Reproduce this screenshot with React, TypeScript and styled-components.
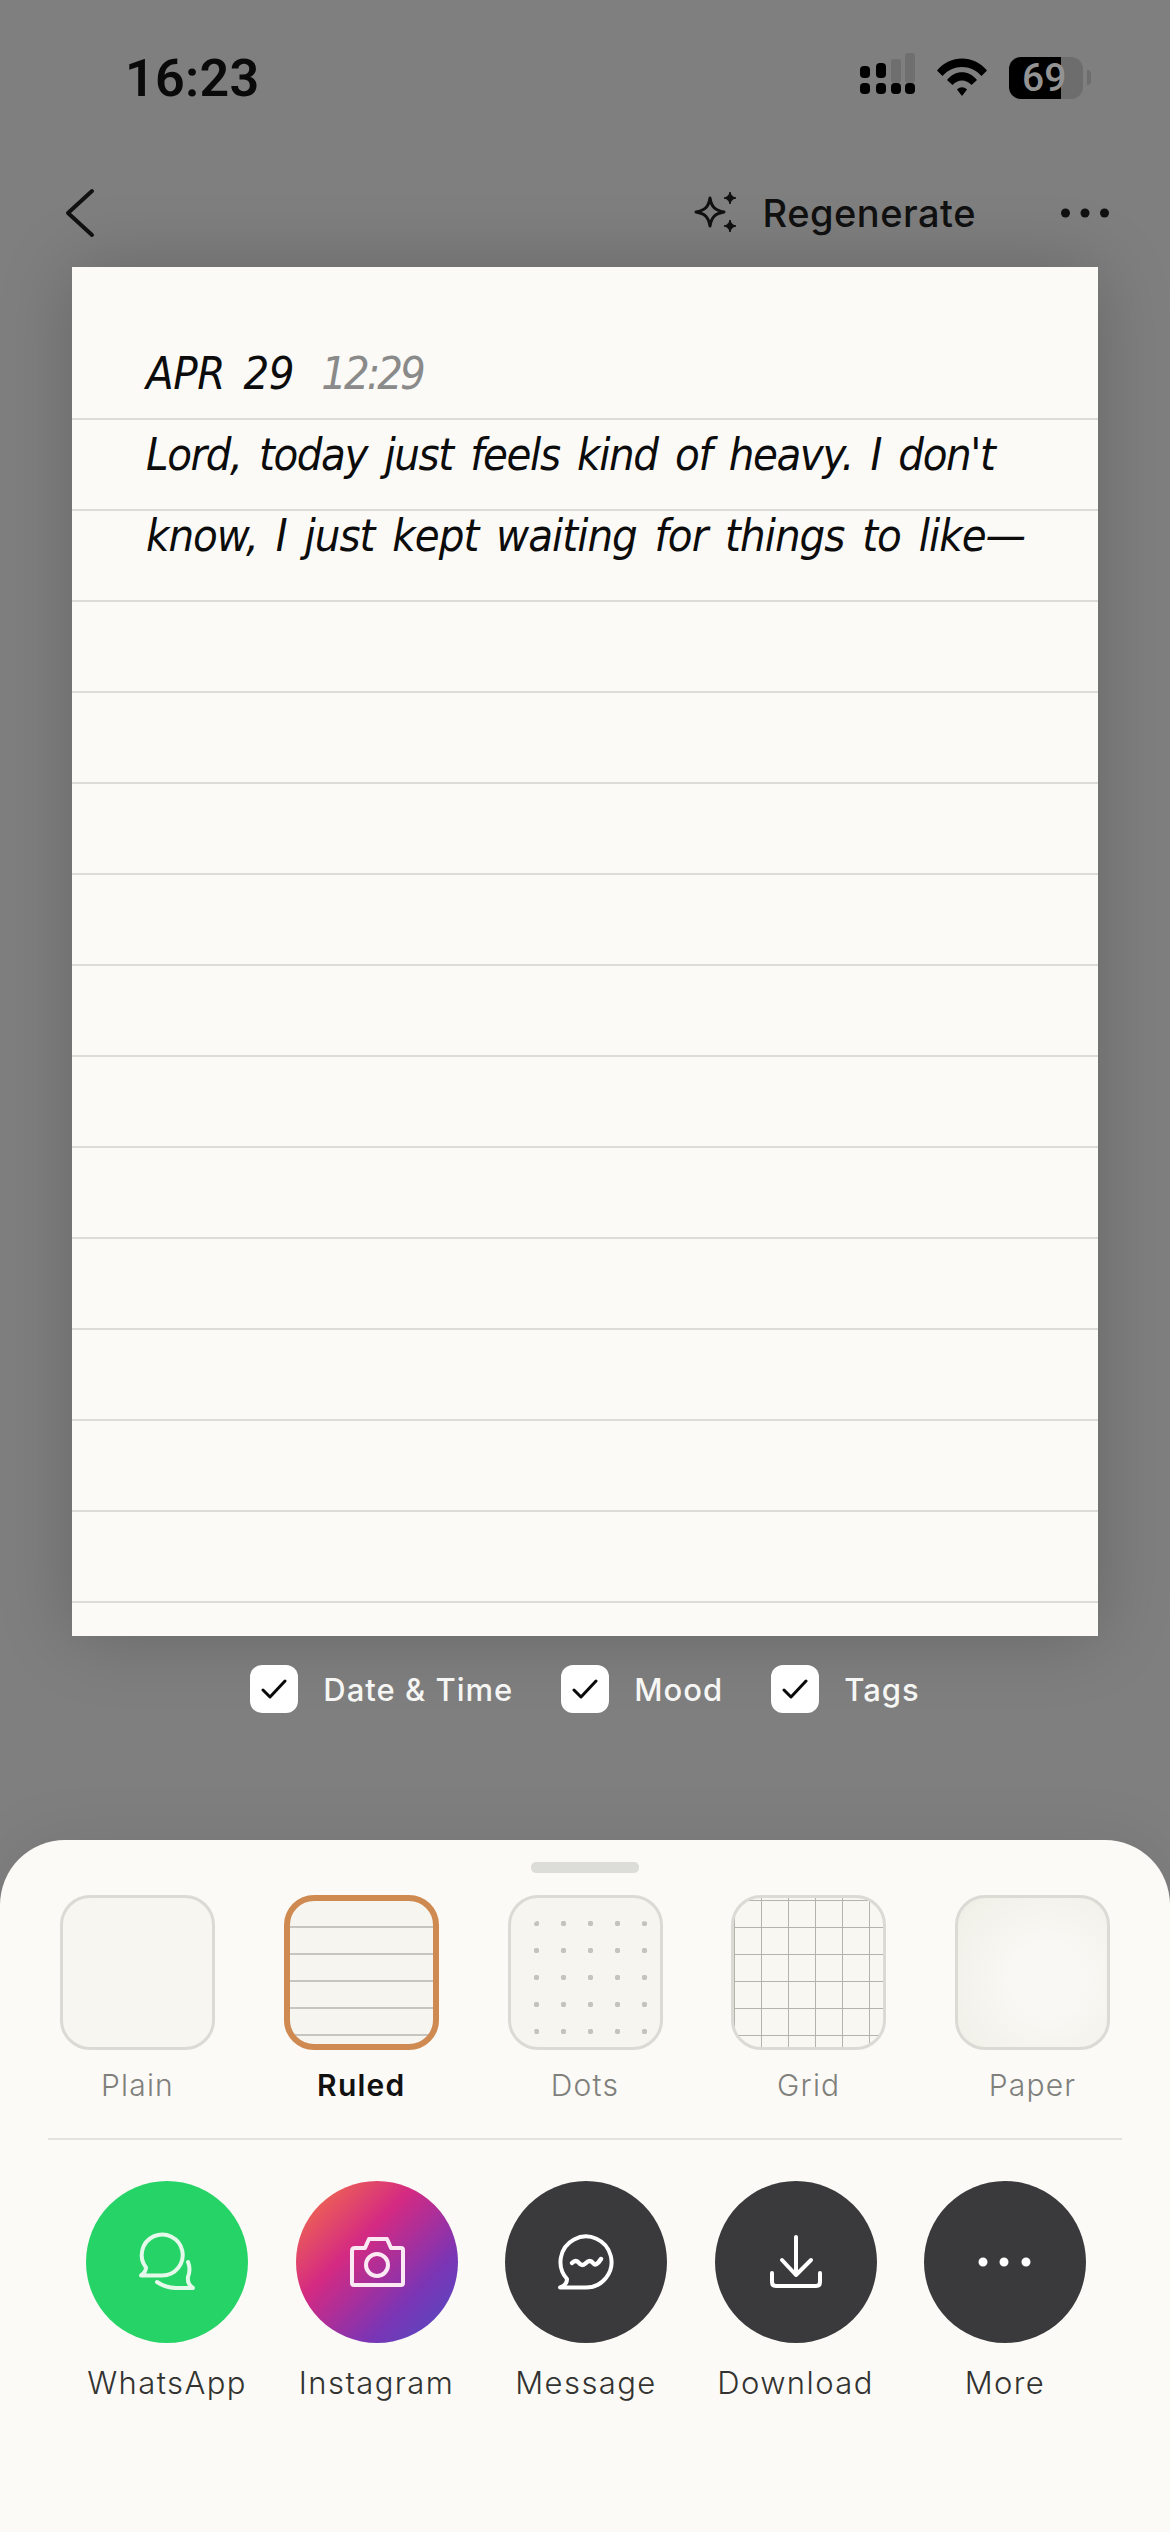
import styled, { createGlobalStyle, css } from "styled-components";

const GlobalStyle = createGlobalStyle`
  html, body {
    margin: 0;
    padding: 0;
    background: #7f7f7f;
  }
  * {
    box-sizing: border-box;
  }
`;

const uiFont = `Inter, "Noto Sans", sans-serif`;
const handFont = `"Liberation Sans Narrow", "DejaVu Sans Condensed", "Liberation Sans", sans-serif`;

const Page = styled.div`
  width: 1170px;
  height: 2532px;
  display: flex;
  flex-direction: column;
  overflow: hidden;
  background: #7f7f7f;
  font-family: ${uiFont};
`;

////////status bar
const StatusBar = styled.div`
  height: 156px;
  flex: none;
  display: flex;
  align-items: center;
  justify-content: space-between;
  padding: 0 79px 0 125px;
`;
const Time = styled.div`
  font-family: Roboto, sans-serif;
  font-size: 52px;
  font-weight: 600;
  color: #0a0a0a;
  letter-spacing: 0.3px;
`;
const StatusIcons = styled.div`
  display: flex;
  align-items: center;
  gap: 22px;
`;
const Battery = styled.div`
  position: relative;
  width: 82px;
  height: 42px;
  flex: none;
`;
const BatteryLevel = styled.div`
  position: absolute;
  inset: 0 8px 0 0;
  border-radius: 12px;
  background: linear-gradient(to right, #000 0 52px, #6d6d6d 52px);
`;
const BatteryNub = styled.div`
  position: absolute;
  right: 0;
  top: 13px;
  width: 4px;
  height: 15px;
  border-radius: 0 4px 4px 0;
  background: #6d6d6d;
`;
const BatteryText = styled.div`
  position: absolute;
  left: 13px;
  top: 0;
  line-height: 42px;
  font-family: Roboto, sans-serif;
  font-size: 39px;
  font-weight: 500;
  color: #939393;
`;

////////nav
const NavBar = styled.div`
  height: 111px;
  flex: none;
  display: flex;
  align-items: center;
  justify-content: space-between;
  padding: 3px 60px 0 64px;
`;
const NavRight = styled.div`
  display: flex;
  align-items: center;
  gap: 84px;
`;
const RegenerateButton = styled.div`
  display: flex;
  align-items: center;
  gap: 22px;
  font-size: 38px;
  font-weight: 500;
  letter-spacing: 0.5px;
  color: #111;
`;

////////note paper
const Paper = styled.div`
  flex: none;
  height: 1369px;
  margin: 0 72px;
  padding: 66px 0 0 74px;
  background:
    linear-gradient(#fbfaf7, #fbfaf7) top / 100% 150px no-repeat,
    linear-gradient(to bottom, transparent 89px, #dcdbd7 89px) 0 62px / 100% 91px,
    #fbfaf7;
  box-shadow: 0 0 70px rgba(0, 0, 0, 0.2);
  font-family: ${handFont};
  font-style: italic;
  color: #0c0c0c;
`;
const HandLine = styled.div<{ $tracking?: number }>`
  height: 81px;
  line-height: 81px;
  font-size: 45px;
  letter-spacing: ${(p) => p.$tracking ?? -1}px;
  word-spacing: 6px;
  white-space: nowrap;
`;
const DateStamp = styled.span`
  letter-spacing: -0.4px;
  margin-right: 27px;
`;
const TimeStamp = styled.span`
  color: #8a8a8a;
  letter-spacing: -3px;
`;

////////checkbox row
const Options = styled.div`
  flex: none;
  margin-top: 29px;
  display: flex;
  justify-content: center;
  gap: 48px;
`;
const Option = styled.div`
  display: flex;
  align-items: center;
  gap: 25px;
  font-size: 31px;
  font-weight: 500;
  letter-spacing: 1px;
  color: #f6f6f4;
`;
const CheckBox = styled.div`
  width: 48px;
  height: 48px;
  border-radius: 12px;
  background: #fff;
  display: flex;
  align-items: center;
  justify-content: center;
`;

////////bottom sheet
const Sheet = styled.div`
  margin-top: auto;
  height: 692px;
  flex: none;
  padding-top: 22px;
  background: #fbfaf6;
  border-radius: 65px 65px 0 0;
  box-shadow: 0 -10px 60px rgba(0, 0, 0, 0.06);
`;
const Handle = styled.div`
  width: 108px;
  height: 11px;
  margin: 0 auto 22px;
  border-radius: 5px;
  background: #dcdcd9;
`;
const ThumbRow = styled.div`
  display: flex;
  justify-content: space-between;
  padding: 0 60px;
`;
const ThumbItem = styled.div`
  width: 155px;
  display: flex;
  flex-direction: column;
  align-items: center;
`;

type Pattern = "plain" | "ruled" | "dots" | "grid" | "paper";

const lineColor = "#c6c5c0";
const patterns = {
  plain: css`
    background: #f7f6f0;
  `,
  ruled: css`
    background:
      linear-gradient(to bottom, transparent 25px, ${lineColor} 25px) 0 0 / 100% 27px,
      #f6f5f0;
  `,
  dots: css`
    padding: 23px 0 0 23px;
    background:
      radial-gradient(circle at 2.5px 2.5px, #c4c3be 2.5px, transparent 3px) 0 0 / 27px 27px content-box,
      #f6f5f0;
  `,
  grid: css`
    background:
      linear-gradient(to bottom, transparent 26px, #b4b3ae 26px) 0 3px / 100% 27px,
      linear-gradient(to right, transparent 26px, #b4b3ae 26px) 1px 0 / 27px 100%,
      #f8f7f2;
  `,
  paper: css`
    background:
      radial-gradient(circle at 60% 55%, #f9f8f4 30%, #f1f0e9 85%, #ebeae2 100%);
  `,
};

const Thumb = styled.div<{ $pattern: Pattern; $selected?: boolean }>`
  width: 155px;
  height: 155px;
  border-radius: 30px;
  border: ${(p) => (p.$selected ? "6px solid #cf8a52" : "3px solid #dbdad5")};
  ${(p) => patterns[p.$pattern]}
`;
const ThumbLabel = styled.div<{ $selected?: boolean }>`
  margin-top: 17px;
  line-height: 36px;
  font-size: 30px;
  letter-spacing: 1.2px;
  font-weight: ${(p) => (p.$selected ? 600 : 300)};
  color: ${(p) => (p.$selected ? "#111" : "#7f7f7c")};
`;
const Divider = styled.div`
  height: 2px;
  margin: 35px 48px 41px;
  background: #e3e2de;
`;
const ShareRow = styled.div`
  display: flex;
  justify-content: space-between;
  padding: 0 84px 0 86px;
`;
const ShareItem = styled.div`
  width: 162px;
  display: flex;
  flex-direction: column;
  align-items: center;
`;
const ShareCircle = styled.div<{ $bg: string }>`
  width: 162px;
  height: 162px;
  border-radius: 50%;
  background: ${(p) => p.$bg};
`;
const ShareLabel = styled.div`
  margin-top: 22px;
  line-height: 36px;
  font-size: 31px;
  font-weight: 300;
  letter-spacing: 1.4px;
  color: #333331;
  white-space: nowrap;
`;

const SignalIcon = () => (
  <svg width="60" height="50" viewBox="0 0 60 50">
    <g fill="#6f6f6f">
      <rect x="36" y="6" width="10" height="24" rx="3" />
      <rect x="50" y="0" width="10" height="30" rx="3" />
    </g>
    <g fill="#000">
      <rect x="5" y="13" width="10" height="12" rx="4" />
      <rect x="21" y="10" width="10" height="15" rx="4" />
      <rect x="5" y="30" width="10" height="11" rx="4" />
      <rect x="21" y="30" width="10" height="11" rx="4" />
      <rect x="36" y="30" width="10" height="11" rx="4" />
      <rect x="50" y="30" width="10" height="11" rx="4" />
    </g>
  </svg>
);

const WifiIcon = () => (
  <svg width="50" height="40" viewBox="0 0 50 40">
    <path d="M0 12.5C13 -3.5 37 -3.5 50 12.5L44.5 18C34 6 16 6 5.500 18Z" fill="#000" />
    <path d="M10 22C18 11.500 32 11.500 40 22L34.500 27C29 21 21 21 15.500 27Z" fill="#000" />
    <path d="M20 31.500C23 28.500 27 28.500 30 31.500L25 38Z" fill="#000" />
  </svg>
);

const BackIcon = () => (
  <svg width="32" height="50" viewBox="0 0 32 50" fill="none" stroke="#111" strokeWidth="4" strokeLinecap="round" strokeLinejoin="round">
    <path d="M28 3L4 25L28 47" />
  </svg>
);

const SparkleIcon = () => (
  <svg width="48" height="48" viewBox="0 0 48 48">
    <path d="M17 9C18.500 18 22 21.500 31 23C22 24.500 18.500 28 17 37C15.500 28 12 24.500 3 23C12 21.500 15.500 18 17 9Z" fill="none" stroke="#111" strokeWidth="3" strokeLinejoin="round" />
    <path d="M37 3C37.800 6.500 39.500 8.200 43 9C39.500 9.800 37.800 11.500 37 15C36.200 11.500 34.500 9.800 31 9C34.500 8.200 36.200 6.500 37 3Z" fill="#111" stroke="#111" />
    <path d="M37 31C37.800 34.500 39.500 36.200 43 37C39.500 37.800 37.800 39.500 37 43C36.200 39.500 34.500 37.800 31 37C34.500 36.200 36.200 34.500 37 31Z" fill="#111" stroke="#111" />
  </svg>
);

const DotsIcon = () => (
  <svg width="50" height="12" viewBox="0 0 50 12" fill="#111">
    <circle cx="5.500" cy="6" r="4.500" />
    <circle cx="25" cy="6" r="4.500" />
    <circle cx="44.500" cy="6" r="4.500" />
  </svg>
);

const CheckIcon = () => (
  <svg width="26" height="20" viewBox="0 0 26 20" fill="none" stroke="#0a0a0a" strokeWidth="3" strokeLinecap="round" strokeLinejoin="round">
    <path d="M2 11L9 18L24 2" />
  </svg>
);

const CircleIcon = ({ children, stroke = "#fff" }: { children: React.ReactNode; stroke?: string }) => (
  <svg width="162" height="162" viewBox="0 0 162 162" fill="none" stroke={stroke} strokeWidth="4" strokeLinecap="round" strokeLinejoin="round">
    {children}
  </svg>
);

const thumbs: { name: string; pattern: Pattern }[] = [
  { name: "Plain", pattern: "plain" },
  { name: "Ruled", pattern: "ruled" },
  { name: "Dots", pattern: "dots" },
  { name: "Grid", pattern: "grid" },
  { name: "Paper", pattern: "paper" },
];

const shares = [
  {
    name: "WhatsApp",
    bg: "#26d366",
    icon: (
      <CircleIcon stroke="#e4f9ea">
        <path d="M60 86.500A20.500 20.500 0 1 1 76 94.500H55Q60 91 60 86.500Z" />
        <path d="M71 101Q80 107 90 107H107Q101 103 102 96Q105 88 102 81" />
      </CircleIcon>
    ),
  },
  {
    name: "Instagram",
    bg: "linear-gradient(135deg, #f0694e 8%, #d42a82 38%, #7a35b5 72%, #4d4fc4 100%)",
    icon: (
      <CircleIcon stroke="#fbe9f3">
        <path d="M59 67H69L73 58H91L95 67H105Q107 67 107 69V102Q107 104 105 104H58Q56 104 56 102V70Q56 67 59 67Z" />
        <circle cx="81" cy="84" r="11" />
      </CircleIcon>
    ),
  },
  {
    name: "Message",
    bg: "#3a393b",
    icon: (
      <CircleIcon>
        <path d="M62 98A25.500 25.500 0 1 1 81 106.500H55Q62 104 62 98Z" />
        <path d="M67 82Q71 78 74 82T81 82T88 82T96 78" strokeWidth="4.500" />
      </CircleIcon>
    ),
  },
  {
    name: "Download",
    bg: "#3a393b",
    icon: (
      <CircleIcon>
        <path d="M81 56V94M67 79L81 94L96 79" />
        <path d="M57 92V101Q57 105 61 105H101Q105 105 105 101V92" />
      </CircleIcon>
    ),
  },
  {
    name: "More",
    bg: "#3a393b",
    icon: (
      <CircleIcon>
        <circle cx="59" cy="81" r="2.500" fill="#fff" />
        <circle cx="80" cy="81" r="2.500" fill="#fff" />
        <circle cx="102" cy="81" r="2.500" fill="#fff" />
      </CircleIcon>
    ),
  },
];

const App = () => {
  return (
    <Page>
      <GlobalStyle />
      <StatusBar>
        <Time>16:23</Time>
        <StatusIcons>
          <SignalIcon />
          <WifiIcon />
          <Battery>
            <BatteryLevel />
            <BatteryNub />
            <BatteryText>69</BatteryText>
          </Battery>
        </StatusIcons>
      </StatusBar>
      <NavBar>
        <BackIcon />
        <NavRight>
          <RegenerateButton>
            <SparkleIcon />
            Regenerate
          </RegenerateButton>
          <DotsIcon />
        </NavRight>
      </NavBar>
      <Paper>
        <HandLine>
          <DateStamp>APR 29</DateStamp>
          <TimeStamp>12:29</TimeStamp>
        </HandLine>
        <HandLine $tracking={-1.4}>Lord, today just feels kind of heavy. I don't</HandLine>
        <HandLine>know, I just kept waiting for things to like—</HandLine>
      </Paper>
      <Options>
        {["Date & Time", "Mood", "Tags"].map((label) => (
          <Option key={label}>
            <CheckBox>
              <CheckIcon />
            </CheckBox>
            {label}
          </Option>
        ))}
      </Options>
      <Sheet>
        <Handle />
        <ThumbRow>
          {thumbs.map((t) => (
            <ThumbItem key={t.name}>
              <Thumb $pattern={t.pattern} $selected={t.pattern === "ruled"} />
              <ThumbLabel $selected={t.pattern === "ruled"}>{t.name}</ThumbLabel>
            </ThumbItem>
          ))}
        </ThumbRow>
        <Divider />
        <ShareRow>
          {shares.map((s) => (
            <ShareItem key={s.name}>
              <ShareCircle $bg={s.bg}>{s.icon}</ShareCircle>
              <ShareLabel>{s.name}</ShareLabel>
            </ShareItem>
          ))}
        </ShareRow>
      </Sheet>
    </Page>
  );
};

export default App;
